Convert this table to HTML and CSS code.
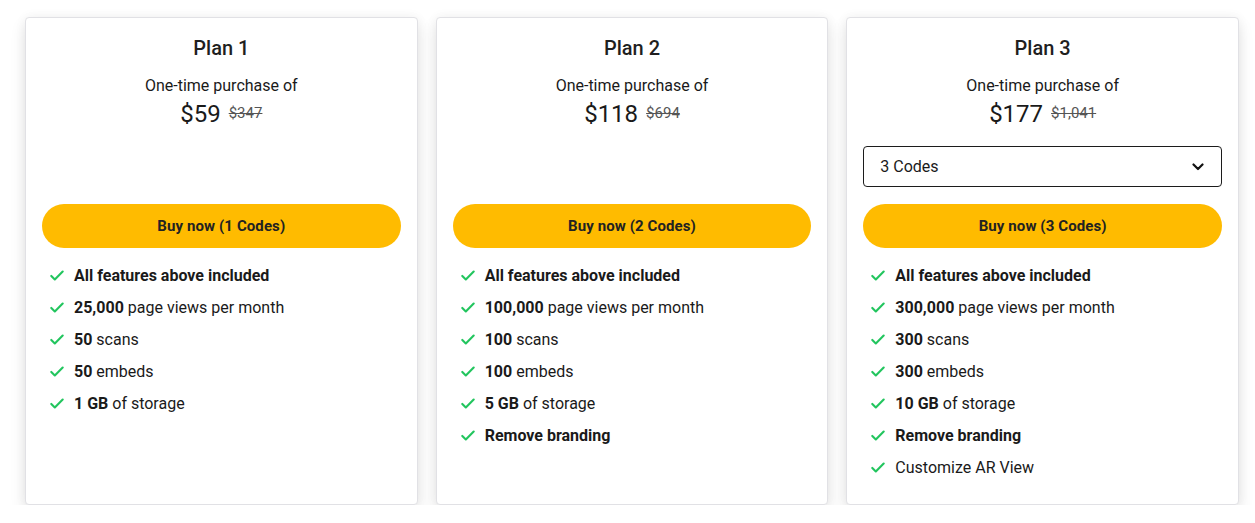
FILE: index.html
```html
<!DOCTYPE html>
<html>
<head>
<meta charset="utf-8">
<link rel="stylesheet" href="styles.css">
</head>
<body>
<div class="plans">
  <div class="card">
    <h2 class="title">Plan 1</h2>
    <p class="sub">One-time purchase of</p>
    <div class="price"><span class="now">$59</span><span class="was">$347</span></div>
    <div class="select-slot"></div>
    <button class="buy">Buy now (1 Codes)</button>
    <ul class="features">
      <li><svg class="check" viewBox="0 0 16 12"><path d="M1.5 6.5l4 4 9-9" /></svg><span><b>All features above included</b></span></li>
      <li><svg class="check" viewBox="0 0 16 12"><path d="M1.5 6.5l4 4 9-9" /></svg><span><b>25,000</b> page views per month</span></li>
      <li><svg class="check" viewBox="0 0 16 12"><path d="M1.5 6.5l4 4 9-9" /></svg><span><b>50</b> scans</span></li>
      <li><svg class="check" viewBox="0 0 16 12"><path d="M1.5 6.5l4 4 9-9" /></svg><span><b>50</b> embeds</span></li>
      <li><svg class="check" viewBox="0 0 16 12"><path d="M1.5 6.5l4 4 9-9" /></svg><span><b>1 GB</b> of storage</span></li>
    </ul>
  </div>
  <div class="card">
    <h2 class="title">Plan 2</h2>
    <p class="sub">One-time purchase of</p>
    <div class="price"><span class="now">$118</span><span class="was">$694</span></div>
    <div class="select-slot"></div>
    <button class="buy">Buy now (2 Codes)</button>
    <ul class="features">
      <li><svg class="check" viewBox="0 0 16 12"><path d="M1.5 6.5l4 4 9-9" /></svg><span><b>All features above included</b></span></li>
      <li><svg class="check" viewBox="0 0 16 12"><path d="M1.5 6.5l4 4 9-9" /></svg><span><b>100,000</b> page views per month</span></li>
      <li><svg class="check" viewBox="0 0 16 12"><path d="M1.5 6.5l4 4 9-9" /></svg><span><b>100</b> scans</span></li>
      <li><svg class="check" viewBox="0 0 16 12"><path d="M1.5 6.5l4 4 9-9" /></svg><span><b>100</b> embeds</span></li>
      <li><svg class="check" viewBox="0 0 16 12"><path d="M1.5 6.5l4 4 9-9" /></svg><span><b>5 GB</b> of storage</span></li>
      <li><svg class="check" viewBox="0 0 16 12"><path d="M1.5 6.5l4 4 9-9" /></svg><span><b>Remove branding</b></span></li>
    </ul>
  </div>
  <div class="card">
    <h2 class="title">Plan 3</h2>
    <p class="sub">One-time purchase of</p>
    <div class="price"><span class="now">$177</span><span class="was">$1,041</span></div>
    <div class="select">
      <span>3 Codes</span>
      <svg class="chev" viewBox="0 0 12 8"><path d="M1.5 1.5l4.5 4.5 4.5-4.5" /></svg>
    </div>
    <button class="buy">Buy now (3 Codes)</button>
    <ul class="features">
      <li><svg class="check" viewBox="0 0 16 12"><path d="M1.5 6.5l4 4 9-9" /></svg><span><b>All features above included</b></span></li>
      <li><svg class="check" viewBox="0 0 16 12"><path d="M1.5 6.5l4 4 9-9" /></svg><span><b>300,000</b> page views per month</span></li>
      <li><svg class="check" viewBox="0 0 16 12"><path d="M1.5 6.5l4 4 9-9" /></svg><span><b>300</b> scans</span></li>
      <li><svg class="check" viewBox="0 0 16 12"><path d="M1.5 6.5l4 4 9-9" /></svg><span><b>300</b> embeds</span></li>
      <li><svg class="check" viewBox="0 0 16 12"><path d="M1.5 6.5l4 4 9-9" /></svg><span><b>10 GB</b> of storage</span></li>
      <li><svg class="check" viewBox="0 0 16 12"><path d="M1.5 6.5l4 4 9-9" /></svg><span><b>Remove branding</b></span></li>
      <li><svg class="check" viewBox="0 0 16 12"><path d="M1.5 6.5l4 4 9-9" /></svg><span>Customize AR View</span></li>
    </ul>
  </div>
</div>
</body>
</html>
```

FILE: styles.css
```css
* { box-sizing: border-box; }
html, body { margin: 0; background: #ffffff; }
body {
  font-family: Roboto, "Liberation Sans", Arial, sans-serif;
  color: #1a1a1a;
  padding: 17px 16px 0 25px;
}
.plans {
  display: grid;
  grid-template-columns: repeat(3, 1fr);
  gap: 18px;
}
.card {
  height: 488px;
  background: #fff;
  border: 1px solid #e1e1e5;
  border-radius: 4px;
  box-shadow: 0 8px 16px rgba(0, 0, 0, 0.1), 0 0 12px rgba(0, 0, 0, 0.05);
  padding: 18px 16px 0 16px;
  display: flex;
  flex-direction: column;
}
.title {
  margin: 0;
  text-align: center;
  font-size: 20px;
  line-height: 24px;
  font-weight: 500;
  color: #1f1f1f;
}
.sub {
  margin: 16px 0 0;
  text-align: center;
  font-size: 16px;
  line-height: 20px;
  color: #1a1a1a;
}
.price {
  margin-top: 2px;
  height: 32px;
  display: flex;
  justify-content: center;
  align-items: center;
  gap: 8px;
}
.now {
  font-size: 24px;
  line-height: 32px;
  color: #1a1a1a;
}
.was {
  font-size: 15px;
  color: #555;
  text-decoration: line-through;
  position: relative;
  top: -1px;
}
.select-slot {
  height: 41px;
  margin-top: 16px;
}
.select {
  height: 41px;
  margin-top: 16px;
  border: 1px solid #1c1c1c;
  border-radius: 4px;
  padding: 0 17px 0 16px;
  display: flex;
  align-items: center;
  justify-content: space-between;
  font-size: 16px;
  color: #1a1a1a;
}
.chev {
  width: 12px;
  height: 8px;
  fill: none;
  stroke: #111;
  stroke-width: 2.2;
  stroke-linecap: round;
  stroke-linejoin: round;
}
.buy {
  margin-top: 17px;
  height: 44px;
  width: 100%;
  border: none;
  border-radius: 22px;
  background: #ffbb00;
  color: #222;
  font-family: Roboto, "Liberation Sans", Arial, sans-serif;
  font-weight: 700;
  font-size: 15px;
  letter-spacing: 0.1px;
  cursor: pointer;
}
.features {
  list-style: none;
  margin: 11px 0 0;
  padding: 0 0 0 8px;
}
.features li {
  display: flex;
  align-items: center;
  gap: 10px;
  height: 32px;
  font-size: 16px;
  color: #1a1a1a;
}
.features b { font-weight: 700; }
.check {
  width: 14px;
  height: 11px;
  fill: none;
  stroke: #22c55e;
  stroke-width: 2.4;
  stroke-linecap: round;
  stroke-linejoin: round;
  flex: none;
}
```
